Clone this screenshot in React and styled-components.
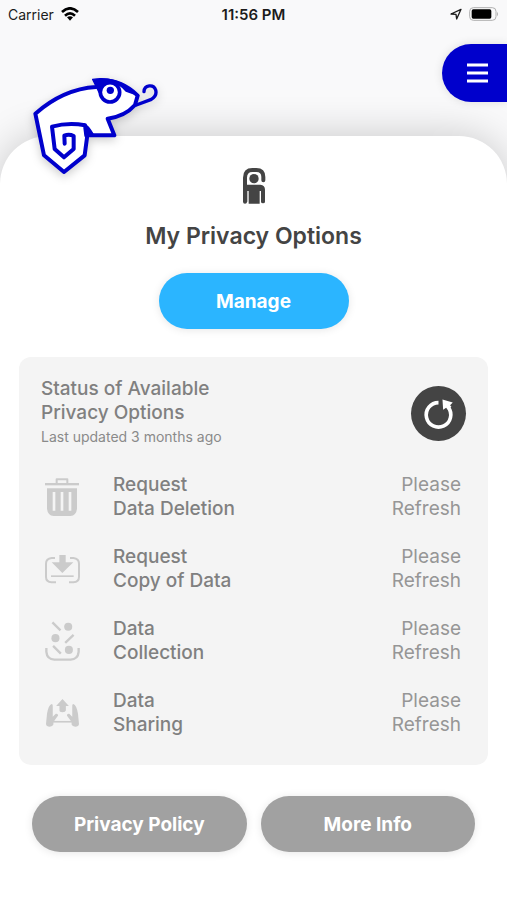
import styled, { createGlobalStyle } from "styled-components";

const GlobalStyle = createGlobalStyle`
    * {
        box-sizing: border-box;
    }
    body {
        margin: 0;
        background-color: #f9f9fa;
        font-family: Inter, "Liberation Sans", sans-serif;
    }
    button {
        border: none;
        padding: 0;
        font-family: inherit;
        cursor: pointer;
    }
`
const Page = styled.div`
    display: flex;
    flex-direction: column;
    min-height: 100vh;
`
const StatusBar = styled.div`
    display: grid;
    grid-template-columns: 1fr auto 1fr;
    align-items: center;
    height: 28px;
    padding: 0 8px;
    font-size: 14px;
    color: #1c1c1c;
`
const StatusGroup = styled.div`
    display: flex;
    align-items: center;
    justify-content: ${props => props.$end ? 'flex-end' : 'flex-start'};
    gap: 7px;
`
const Time = styled.span`
    font-size: 15px;
    font-weight: 600;
`
const Header = styled.header`
    position: relative;
    display: flex;
    justify-content: flex-end;
    height: 108px;
    padding-top: 16px;
`
// the chameleon hangs over the top edge of the card
const Logo = styled.svg`
    position: absolute;
    top: 37px;
    left: 20px;
    z-index: 2;
    filter: drop-shadow(0 3px 5px rgba(0, 0, 0, 0.2));
`
const MenuButton = styled.button`
    display: flex;
    align-items: center;
    width: 65px;
    height: 58px;
    padding-left: 25px;
    border-radius: 29px 0 0 29px;
    background-color: #0000cc;
    box-shadow: 0 0 10px rgba(0, 0, 0, 0.12);
    position: relative;
    z-index: 1;
`
const Card = styled.main`
    flex: 1;
    display: flex;
    flex-direction: column;
    align-items: center;
    padding: 32px 19px;
    border-radius: 48px 48px 0 0;
    background-color: white;
    box-shadow: 0 0 40px rgba(0, 0, 0, 0.2);
`
const Title = styled.h1`
    margin: 16px 0 21px;
    font-size: 23px;
    line-height: 32px;
    font-weight: 600;
    color: #444444;
`
const PillButton = styled.button`
    flex: ${props => props.$primary ? 'none' : '1'};
    width: ${props => props.$primary ? '190px' : 'auto'};
    height: 56px;
    border-radius: 28px;
    background-color: ${props => props.$primary ? '#2bb5ff' : '#a1a1a1'};
    color: white;
    font-size: 19px;
    font-weight: 700;
    box-shadow: 0 1px 8px rgba(0, 0, 0, 0.1);
`
const Panel = styled.section`
    display: flex;
    flex-direction: column;
    gap: 24px;
    width: 100%;
    margin: 28px 0 31px;
    padding: 20px 22px 28px;
    border-radius: 12px;
    background-color: #f4f4f4;
`
const PanelHeader = styled.div`
    display: flex;
    align-items: center;
    justify-content: space-between;
    line-height: 24px;
`
const PanelTitle = styled.h2`
    margin: 0;
    font-size: 19px;
    font-weight: 500;
    color: #808080;
`
const Updated = styled.p`
    margin: 0;
    font-size: 14px;
    color: #8a8a8a;
`
const RefreshButton = styled.button`
    display: flex;
    width: 55px;
    height: 55px;
    border-radius: 50%;
    background-color: #444444;
`
const OptionList = styled.ul`
    display: flex;
    flex-direction: column;
    gap: 24px;
    margin: 0;
    padding: 0 5px 0 0;
    list-style: none;
`
const Option = styled.li`
    display: grid;
    grid-template-columns: 42px 1fr auto;
    column-gap: 30px;
    align-items: center;
    font-size: 19px;
    line-height: 24px;
    color: #969696;
`
const OptionIcon = styled.span`
    display: flex;
    justify-content: center;
    color: #cbcbcb;
`
const OptionName = styled.span`
    font-weight: 500;
    color: #808080;
`
const OptionStatus = styled.span`
    text-align: right;
`
const Footer = styled.footer`
    display: flex;
    gap: 14px;
    width: 100%;
    padding: 0 13px;
`

const ChameleonLogo = () => (
    <Logo width="150" height="120" viewBox="0 0 450 360" fill="none" stroke="#0000cc" strokeWidth="12" strokeLinejoin="round" strokeLinecap="round" aria-hidden="true">
        <path fill="white" d="M46 146 Q130 72 228 66 L240 46 Q305 44 353 92 L345 120 Q315 154 263 161 L283 211 H202 L194 271 L132 321 L72 271 Z" />
        <path fill="#0000cc" strokeWidth="4" d="M218 43 Q276 34 322 66 L356 92 L318 78 Q300 56 276 52 Q244 54 238 84 Z" />
        <path fill="#0000cc" strokeWidth="4" d="M192 177 Q204 180 222 212 H197 Z" />
        <path d="M199 212 L195 181 Q145 172 96 185 L104 252 L132 277 L161 252 V213 Q147 206 133 212 L134 236" />
        <path d="M349 120 L392 104 Q412 93 407 75 C401 57 373 59 372 80" strokeWidth="10" />
        <circle cx="270" cy="82" r="29" fill="white" strokeWidth="11" />
        <circle cx="271" cy="76" r="11" fill="#0000cc" stroke="none" />
    </Logo>
)

const WifiIcon = () => (
    <svg width="18" height="14" viewBox="0 0 54 42" fill="none" stroke="black" strokeWidth="8" aria-hidden="true">
        <path d="M3 15 Q27 -7 51 15" />
        <path d="M12 26 Q27 12 42 26" />
        <path d="M18 31 Q27 24 36 31 L27 41 Z" fill="black" stroke="none" />
    </svg>
)

const LocationIcon = () => (
    <svg width="12" height="12" viewBox="0 0 36 36" fill="none" stroke="#1c1c1c" strokeWidth="4" strokeLinejoin="round" aria-hidden="true">
        <path d="M3 18 L33 4 L20 33 L18 19 Z" />
    </svg>
)

const BatteryIcon = () => (
    <svg width="30" height="14" viewBox="0 0 90 42" aria-hidden="true">
        <rect x="2" y="2" width="79" height="38" rx="11" fill="none" stroke="#b0b0b0" strokeWidth="3" />
        <rect x="8" y="7" width="59" height="28" rx="5" fill="black" />
        <path d="M84 14 Q90 21 84 28 Z" fill="#b0b0b0" />
    </svg>
)

const PersonIcon = () => (
    <svg width="24" height="36" viewBox="-2 -1 70 108" fill="#444444" aria-hidden="true">
        <path d="M6 100 V28 Q6 5 28 5 H40 Q61 5 61 26 V36" fill="none" stroke="#444444" strokeWidth="12" strokeLinecap="round" />
        <circle cx="33" cy="31" r="14" />
        <path d="M6 49 H52 Q66 50 66 64 V100 Q66 105 60 105 Q54 105 54 100 V68 H50 V106 H17 V68 H13 V100 L6 105 Z" />
    </svg>
)

const RefreshIcon = () => (
    <svg width="55" height="55" viewBox="0 0 166 166" fill="none" aria-hidden="true">
        <path d="M83 50 A37 37 0 1 0 112 64" stroke="white" strokeWidth="11" />
        <path d="M95 41 L126 50 L118 58 L122 63 L112 72 L106 66 L97 72 Z" fill="white" />
    </svg>
)

const DeleteIcon = () => (
    <svg width="34" height="38" viewBox="0 0 102 114" fill="currentColor" aria-hidden="true">
        <path d="M35 16 V4 H67 V16" fill="none" stroke="currentColor" strokeWidth="6" strokeLinejoin="round" />
        <rect x="0" y="15" width="102" height="7" />
        <path fillRule="evenodd" d="M6 31 H96 V92 Q94 112 76 114 H26 Q8 112 6 92 Z M23 42 V98 H31 V42 Z M47 42 V98 H55 V42 Z M71 42 V98 H79 V42 Z" />
    </svg>
)

const CopyIcon = () => (
    <svg width="35" height="29" viewBox="0 0 105 87" fill="currentColor" aria-hidden="true">
        <path d="M30 9 H20 Q3 11 3 26 V66 Q3 81 20 82 H33 M75 9 H85 Q102 11 102 26 V66 Q102 81 85 82 H72" fill="none" stroke="currentColor" strokeWidth="6" />
        <path d="M43 0 H62 V22 H85 L52 54 L20 22 H43 Z" />
        <rect x="18" y="61" width="68" height="5" />
    </svg>
)

const CollectIcon = () => (
    <svg width="35" height="40" viewBox="0 0 104 119" fill="currentColor" aria-hidden="true">
        <circle cx="69" cy="17" r="12" />
        <circle cx="31" cy="51" r="12" />
        <circle cx="71" cy="86" r="12" />
        <g fill="none" stroke="currentColor" strokeWidth="7">
            <path d="M22 4 L46 28 M85 41 L60 65 M24 74 L47 97" />
            <path d="M4 80 V92 Q6 114 28 115 H76 Q98 114 100 92 V80" />
        </g>
    </svg>
)

const ShareIcon = () => (
    <svg width="33" height="28" viewBox="0 0 98 83" fill="currentColor" aria-hidden="true">
        <path d="M49 0 L68 21 H59 V34 Q58 39 49 39 Q40 39 40 34 V21 H30 Z" />
        <path d="M0 74 L3 44 Q7 19 17 15 Q21 16 20 22 V53 L29 44 Q36 43 36 49 L22 68 V76 Q20 82 11 82 Q1 82 0 74 Z" />
        <path d="M98 74 L95 44 Q91 19 81 15 Q77 16 78 22 V53 L69 44 Q62 43 62 49 L76 68 V76 Q78 82 87 82 Q97 82 98 74 Z" />
        <rect x="20" y="65" width="58" height="5" />
    </svg>
)

const options = [
    { name: ['Request', 'Data Deletion'], Icon: DeleteIcon },
    { name: ['Request', 'Copy of Data'], Icon: CopyIcon },
    { name: ['Data', 'Collection'], Icon: CollectIcon },
    { name: ['Data', 'Sharing'], Icon: ShareIcon },
]

function App() {
    return (
        <Page>
            <GlobalStyle />
            <StatusBar>
                <StatusGroup>Carrier <WifiIcon /></StatusGroup>
                <Time>11:56 PM</Time>
                <StatusGroup $end><LocationIcon /><BatteryIcon /></StatusGroup>
            </StatusBar>
            <Header>
                <ChameleonLogo />
                <MenuButton aria-label="Menu">
                    <svg width="21" height="20" viewBox="0 0 21 20" stroke="white" strokeWidth="3" aria-hidden="true">
                        <path d="M0 2 H21 M0 10 H21 M0 18 H21" />
                    </svg>
                </MenuButton>
            </Header>
            <Card>
                <PersonIcon />
                <Title>My Privacy Options</Title>
                <PillButton $primary>Manage</PillButton>
                <Panel>
                    <PanelHeader>
                        <div>
                            <PanelTitle>Status of Available<br />Privacy Options</PanelTitle>
                            <Updated>Last updated 3 months ago</Updated>
                        </div>
                        <RefreshButton aria-label="Refresh"><RefreshIcon /></RefreshButton>
                    </PanelHeader>
                    <OptionList>
                        {options.map(({ name, Icon }) => <Option key={name.join(' ')}>
                            <OptionIcon><Icon /></OptionIcon>
                            <OptionName>{name[0]}<br />{name[1]}</OptionName>
                            <OptionStatus>Please<br />Refresh</OptionStatus>
                        </Option>)}
                    </OptionList>
                </Panel>
                <Footer>
                    <PillButton>Privacy Policy</PillButton>
                    <PillButton>More Info</PillButton>
                </Footer>
            </Card>
        </Page>
    )
}

export default App;
